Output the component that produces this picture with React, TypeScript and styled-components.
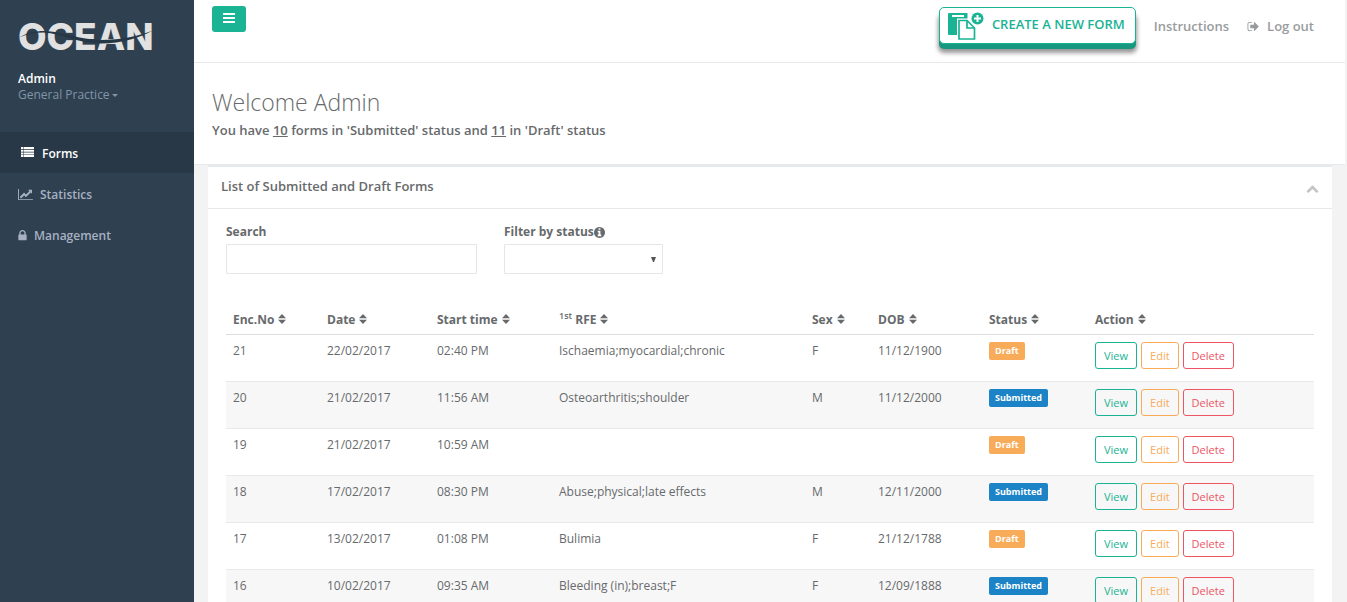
import React from "react";
import styled, { createGlobalStyle, css } from "styled-components";

const GlobalStyle = createGlobalStyle`
  *, *::before, *::after { box-sizing: border-box; }
  html { scrollbar-width: none; }
  body {
    margin: 0;
    background: #2f4050;
    color: #676a6c;
    font: 13px/18px "Open Sans", "Noto Sans", sans-serif;
  }
  button, input, select { font: inherit; color: inherit; }
  h1, h2, p { margin: 0; }
`;

const Layout = styled.div`
  display: grid;
  grid-template-columns: 194px minmax(0, 1fr);
  min-height: 100vh;
`;

const Sidebar = styled.nav`
  background: #2f4050;
`;

const Profile = styled.div`
  display: flex;
  flex-direction: column;
  align-items: flex-start;
  height: 132px;
  padding: 8px 18px 0;
`;

const Logo = styled.svg`
  display: block;
  width: 140px;
  height: 54px;
  margin-bottom: 9px;
`;

const UserName = styled.strong`
  color: #fff;
  font-size: 12px;
  font-weight: 600;
  line-height: 16px;
`;

const RoleButton = styled.button`
  display: flex;
  align-items: center;
  gap: 2px;
  padding: 0;
  border: 0;
  background: none;
  color: #8095a8;
  font-size: 12px;
  line-height: 16px;
`;

const Caret = styled.span`
  border: 3px solid transparent;
  border-top-color: currentColor;
  border-bottom: 0;
`;

const NavLink = styled.a<{ $active?: boolean }>`
  display: flex;
  align-items: center;
  gap: 7px;
  height: 41px;
  padding: 2px 18px 0;
  color: ${(p) => (p.$active ? "#fff" : "#a7b1c2")};
  background: ${(p) => (p.$active ? "#293846" : "transparent")};
  font-size: 12px;
  font-weight: 600;
  text-decoration: none;
`;

const Main = styled.main`
  min-width: 0;
  margin-right: 2px;
  background: #f3f3f3;
  box-shadow: 2px 0 0 #f3f3f3;
`;

const TopBar = styled.header`
  display: flex;
  justify-content: space-between;
  height: 63px;
  padding: 6px 31px 0 18px;
  background: #fff;
  border-bottom: 1px solid #e7eaec;
`;

const MenuButton = styled.button`
  display: flex;
  align-items: center;
  justify-content: center;
  width: 34px;
  height: 26px;
  padding: 0 0 2px;
  border: 0;
  border-radius: 3px;
  background: #1ab394;
  color: #fff;
`;

const TopActions = styled.div`
  display: flex;
  align-items: flex-start;
  gap: 18px;
`;

const CreateButton = styled.button`
  display: flex;
  align-items: center;
  gap: 8px;
  height: 37px;
  margin-top: 1px;
  padding: 0 10px 0 8px;
  border: 1px solid #1ab394;
  border-radius: 5px;
  background: #fff;
  box-shadow: 0 5px 0 #17987e, 0 8px 4px 1px #999;
  color: #1ab394;
  font-weight: 600;
`;

const CreateLabel = styled.span`
  padding-bottom: 3px;
`;

const TopLink = styled.a`
  display: flex;
  align-items: center;
  gap: 8px;
  margin-top: 11px;
  color: #999c9e;
  font-weight: 600;
  line-height: 18px;
  text-decoration: none;
`;

const Welcome = styled.section`
  height: 102px;
  padding: 24px 18px 0;
  background: #fff;
  border-bottom: 1px solid #e7eaec;
`;

const Title = styled.h1`
  font-size: 23px;
  font-weight: 300;
  line-height: 30px;
`;

const Summary = styled.p`
  margin-top: 4px;
  font-weight: 600;
`;

const Panel = styled.section`
  margin: -1px 13px 0 14px;
  background: #fff;
  border-top: 3px solid #e7eaec;
`;

const PanelHeader = styled.div`
  display: flex;
  align-items: center;
  justify-content: space-between;
  height: 42px;
  padding: 0 13px 4px;
  border-bottom: 1px solid #e7eaec;
`;

const PanelTitle = styled.h2`
  font-size: 13px;
  font-weight: 600;
  line-height: 18px;
`;

const CollapseButton = styled.button`
  display: flex;
  padding: 6px 0 0;
  border: 0;
  background: none;
  color: #c4c4c4;
`;

const PanelBody = styled.div`
  padding: 14px 18px 20px;
`;

const Filters = styled.div`
  display: flex;
  gap: 27px;
  margin-bottom: 30px;
`;

const Field = styled.div<{ $width: number }>`
  width: ${(p) => p.$width}px;
`;

const FieldLabel = styled.label`
  display: flex;
  align-items: center;
  height: 18px;
  margin-bottom: 3px;
  font-size: 12px;
  font-weight: 700;
`;

const control = css`
  display: block;
  width: 100%;
  height: 30px;
  border: 1px solid #e5e6e7;
  border-radius: 1px;
  background: #fff;
`;

const TextInput = styled.input`
  ${control}
  padding: 4px 10px;
`;

const SelectWrap = styled.div`
  position: relative;
`;

const Select = styled.select`
  ${control}
  appearance: none;
  padding: 4px 20px 4px 10px;
`;

const SelectArrow = styled.svg`
  position: absolute;
  right: 7px;
  top: 13px;
  pointer-events: none;
`;

const Table = styled.table`
  width: 100%;
  table-layout: fixed;
  border-collapse: collapse;
  font-size: 12px;
`;

const HeadCell = styled.th`
  height: 30px;
  padding: 2px 0 0 7px;
  border-bottom: 1px solid #ddd;
  text-align: left;
  font-weight: 700;
  vertical-align: middle;
  white-space: nowrap;

  sup {
    font-size: 9px;
    line-height: 0;
    font-weight: 600;
  }
  svg {
    margin-left: 4px;
  }
`;

const Row = styled.tr`
  height: 47px;
  &:nth-child(even) { background: #f7f7f7; }
`;

const Cell = styled.td`
  padding: 7px 0 0 7px;
  border-bottom: 1px solid #e7eaec;
  vertical-align: top;
  white-space: nowrap;
`;

const Badge = styled.span<{ $tone: string }>`
  display: block;
  width: max-content;
  padding: 0 6px;
  border-radius: 2px;
  background: ${(p) => p.$tone};
  color: #fff;
  font-size: 9px;
  font-weight: 700;
  line-height: 18px;
`;

const Actions = styled.div`
  display: flex;
  gap: 4px;
`;

const ActionButton = styled.button<{ $tone: string }>`
  height: 27px;
  padding: 0 8px;
  border: 1px solid ${(p) => p.$tone};
  border-radius: 3px;
  background: transparent;
  color: ${(p) => p.$tone};
  font-size: 11px;
  line-height: 25px;
`;

const paths = {
  chart:
    "M2048 1536v128h-2048v-1536h128v1408h1920zm-128-1248v435q0 21-19.5 29.5t-35.5-7.5l-121-121-633 633q-10 10-23 10t-23-10l-233-233-416 416-192-192 585-585q10-10 23-10t23 10l233 233 464-464-121-121q-16-16-7.5-35.5t29.5-19.5h435q14 0 23 9t9 23z",
  lock: "M640 768h512v-192q0-106-75-181t-181-75-181 75-75 181v192zm832 96v576q0 40-28 68t-68 28h-960q-40 0-68-28t-28-68v-576q0-40 28-68t68-28h32v-192q0-184 132-316t316-132 316 132 132 316v192h32q40 0 68 28t28 68z",
  logout:
    "M704 1440q0 4 1 20t.5 26.5-3 23.5-10 19.5-20.5 6.5h-320q-119 0-203.5-84.5t-84.5-203.5v-704q0-119 84.5-203.5t203.5-84.5h320q13 0 22.5 9.5t9.5 22.5q0 4 1 20t.5 26.5-3 23.5-10 19.5-20.5 6.5h-320q-66 0-113 47t-47 113v704q0 66 47 113t113 47h312l11.5 1 11.5 3 8 5.5 7 9 2 13.5zm928-544q0 26-19 45l-544 544q-19 19-45 19t-45-19-19-45v-288h-448q-26 0-45-19t-19-45v-384q0-26 19-45t45-19h448v-288q0-26 19-45t45-19 45 19l544 544q19 19 19 45z",
  up: "M1683 1331l-166 165q-19 19-45 19t-45-19l-531-531-531 531q-19 19-45 19t-45-19l-166-165q-19-19-19-45.5t19-45.5l742-741q19-19 45-19t45 19l742 741q19 19 19 45.5t-19 45.5z",
  info: "M1152 1376v-160q0-14-9-23t-23-9h-96v-512q0-14-9-23t-23-9h-320q-14 0-23 9t-9 23v160q0 14 9 23t23 9h96v320h-96q-14 0-23 9t-9 23v160q0 14 9 23t23 9h448q14 0 23-9t9-23zm-128-896v-160q0-14-9-23t-23-9h-192q-14 0-23 9t-9 23v160q0 14 9 23t23 9h192q14 0 23-9t9-23zm640 416q0 209-103 385.5t-279.5 279.5-385.5 103-385.5-103-279.5-279.5-103-385.5 103-385.5 279.5-279.5 385.5-103 385.5 103 279.5 279.5 103 385.5z",
};

function Glyph({ d, width, height, box }: { d: string; width: number; height: number; box: string }) {
  return (
    <svg width={width} height={height} viewBox={box} fill="currentColor" aria-hidden="true">
      <path d={d} />
    </svg>
  );
}

function SortIcon() {
  return (
    <svg width="8" height="10" viewBox="0 0 8 10" fill="currentColor" aria-hidden="true">
      <path d="M4 0l4 4.300H0zM0 5.700h8L4 10z" />
    </svg>
  );
}

function ListIcon() {
  return (
    <svg width="17" height="14" viewBox="0 0 17 14" fill="currentColor" aria-hidden="true">
      <path d="M3 0h2.500v2H3zM6 0h10v2H6zM3 2.700h2.500v2H3zM6 2.700h10v2H6zM3 5.400h2.500v2H3zM6 5.400h10v2H6zM3 8.100h2.500v2H3zM6 8.100h10v2H6z" />
    </svg>
  );
}

function NewFormIcon() {
  return (
    <svg width="36" height="28" viewBox="0 0 36 28" aria-hidden="true">
      <path fill="#1ab394" d="M1 1h18.500v22H1a1 1 0 0 1-1-1V2a1 1 0 0 1 1-1z" />
      <path fill="#fff" d="M4 3h12v2H4z" />
      <path fill="#fff" d="M9 6.500h11.500l7.500 8V28H9z" />
      <path fill="#fff" stroke="#1ab394" strokeWidth="1.700" d="M11 8.500h8l7.500 7.500v11H11z" />
      <path fill="none" stroke="#1ab394" strokeWidth="1.700" d="M19 8.500v7.500h7.500" />
      <circle cx="29.500" cy="6.500" r="7" fill="#fff" />
      <circle cx="29.500" cy="6.500" r="6" fill="#1ab394" />
      <path stroke="#fff" strokeWidth="2" d="M29.500 3v7M26 6.500h7" />
    </svg>
  );
}

function OceanLogo() {
  return (
    <Logo viewBox="0 0 140 54" role="img" aria-label="Ocean">
      <text x="0" y="42" fill="#e1e1e1" fontFamily="Inter, sans-serif" fontWeight="800" fontSize="37">
        OCEAN
      </text>
      <path
        fill="#263746"
        d="M1 29.500C9 25 17 23 26 23c19 0 35 9 57 9 21 0 37-4 52-9.500-15 7.500-30 13-52 13-23 0-39-10-57-11-9 0-17 1.500-25 5z"
      />
    </Logo>
  );
}

const tones = { Draft: "#f8ac59", Submitted: "#1c84c6" };

type Form = {
  no: number;
  date: string;
  time: string;
  rfe: string;
  sex: string;
  dob: string;
  status: keyof typeof tones;
};

const forms: Form[] = [
  { no: 21, date: "22/02/2017", time: "02:40 PM", rfe: "Ischaemia;myocardial;chronic", sex: "F", dob: "11/12/1900", status: "Draft" },
  { no: 20, date: "21/02/2017", time: "11:56 AM", rfe: "Osteoarthritis;shoulder", sex: "M", dob: "11/12/2000", status: "Submitted" },
  { no: 19, date: "21/02/2017", time: "10:59 AM", rfe: "", sex: "", dob: "", status: "Draft" },
  { no: 18, date: "17/02/2017", time: "08:30 PM", rfe: "Abuse;physical;late effects", sex: "M", dob: "12/11/2000", status: "Submitted" },
  { no: 17, date: "13/02/2017", time: "01:08 PM", rfe: "Bulimia", sex: "F", dob: "21/12/1788", status: "Draft" },
  { no: 16, date: "10/02/2017", time: "09:35 AM", rfe: "Bleeding (in);breast;F", sex: "F", dob: "12/09/1888", status: "Submitted" },
];

const columns: { label: React.ReactNode; key: string; share: number }[] = [
  { key: "no", label: "Enc.No", share: 94 },
  { key: "date", label: "Date", share: 110 },
  { key: "time", label: "Start time", share: 122 },
  { key: "rfe", label: <><sup>1st</sup> RFE</>, share: 253 },
  { key: "sex", label: "Sex", share: 66 },
  { key: "dob", label: "DOB", share: 111 },
  { key: "status", label: "Status", share: 106 },
  { key: "action", label: "Action", share: 226 },
];
const totalShare = columns.reduce((sum, c) => sum + c.share, 0);

const Col = styled.col<{ $share: number }>`
  width: ${(p) => (p.$share / totalShare) * 100}%;
`;

export default function App() {
  return (
    <>
      <GlobalStyle />
      <Layout>
        <Sidebar>
          <Profile>
            <OceanLogo />
            <UserName>Admin</UserName>
            <RoleButton type="button">
              General Practice <Caret />
            </RoleButton>
          </Profile>
          <NavLink href="#forms" $active>
            <ListIcon />
            Forms
          </NavLink>
          <NavLink href="#statistics">
            <Glyph d={paths.chart} width={15} height={13} box="0 0 2048 1792" />
            Statistics
          </NavLink>
          <NavLink href="#management">
            <Glyph d={paths.lock} width={9} height={13} box="320 0 1152 1792" />
            Management
          </NavLink>
        </Sidebar>

        <Main>
          <TopBar>
            <MenuButton type="button" aria-label="Toggle menu">
              <svg width="12" height="10" viewBox="0 0 12 10" fill="currentColor" aria-hidden="true">
                <path d="M0 0h12v2H0zM0 4h12v2H0zM0 8h12v2H0z" />
              </svg>
            </MenuButton>
            <TopActions>
              <CreateButton type="button">
                <NewFormIcon />
                <CreateLabel>CREATE A NEW FORM</CreateLabel>
              </CreateButton>
              <TopLink href="#instructions">Instructions</TopLink>
              <TopLink href="#logout">
                <Glyph d={paths.logout} width={12} height={13} box="0 0 1664 1792" />
                Log out
              </TopLink>
            </TopActions>
          </TopBar>

          <Welcome>
            <Title>Welcome Admin</Title>
            <Summary>
              You have <u>10</u> forms in 'Submitted' status and <u>11</u> in 'Draft' status
            </Summary>
          </Welcome>

          <Panel>
            <PanelHeader>
              <PanelTitle>List of Submitted and Draft Forms</PanelTitle>
              <CollapseButton type="button" aria-label="Collapse panel">
                <Glyph d={paths.up} width={13} height={13} box="0 0 1792 1792" />
              </CollapseButton>
            </PanelHeader>
            <PanelBody>
              <Filters>
                <Field $width={251}>
                  <FieldLabel htmlFor="search">Search</FieldLabel>
                  <TextInput id="search" type="text" />
                </Field>
                <Field $width={159}>
                  <FieldLabel htmlFor="status">
                    Filter by status
                    <Glyph d={paths.info} width={11} height={11} box="128 128 1536 1536" />
                  </FieldLabel>
                  <SelectWrap>
                    <Select id="status" defaultValue="">
                      <option value=""></option>
                      <option>Draft</option>
                      <option>Submitted</option>
                    </Select>
                    <SelectArrow width="5" height="5" viewBox="0 0 5 5" fill="#555" aria-hidden="true">
                      <path d="M0 0h5L3 5H2z" />
                    </SelectArrow>
                  </SelectWrap>
                </Field>
              </Filters>

              <Table>
                <colgroup>
                  {columns.map((c) => (
                    <Col key={c.key} $share={c.share} />
                  ))}
                </colgroup>
                <thead>
                  <tr>
                    {columns.map((c) => (
                      <HeadCell key={c.key} scope="col">
                        {c.label}
                        <SortIcon />
                      </HeadCell>
                    ))}
                  </tr>
                </thead>
                <tbody>
                  {forms.map((f) => (
                    <Row key={f.no}>
                      <Cell>{f.no}</Cell>
                      <Cell>{f.date}</Cell>
                      <Cell>{f.time}</Cell>
                      <Cell>{f.rfe}</Cell>
                      <Cell>{f.sex}</Cell>
                      <Cell>{f.dob}</Cell>
                      <Cell>
                        <Badge $tone={tones[f.status]}>{f.status}</Badge>
                      </Cell>
                      <Cell>
                        <Actions>
                          <ActionButton type="button" $tone="#1ab394">View</ActionButton>
                          <ActionButton type="button" $tone="#f8ac59">Edit</ActionButton>
                          <ActionButton type="button" $tone="#ed5565">Delete</ActionButton>
                        </Actions>
                      </Cell>
                    </Row>
                  ))}
                </tbody>
              </Table>
            </PanelBody>
          </Panel>
        </Main>
      </Layout>
    </>
  );
}
